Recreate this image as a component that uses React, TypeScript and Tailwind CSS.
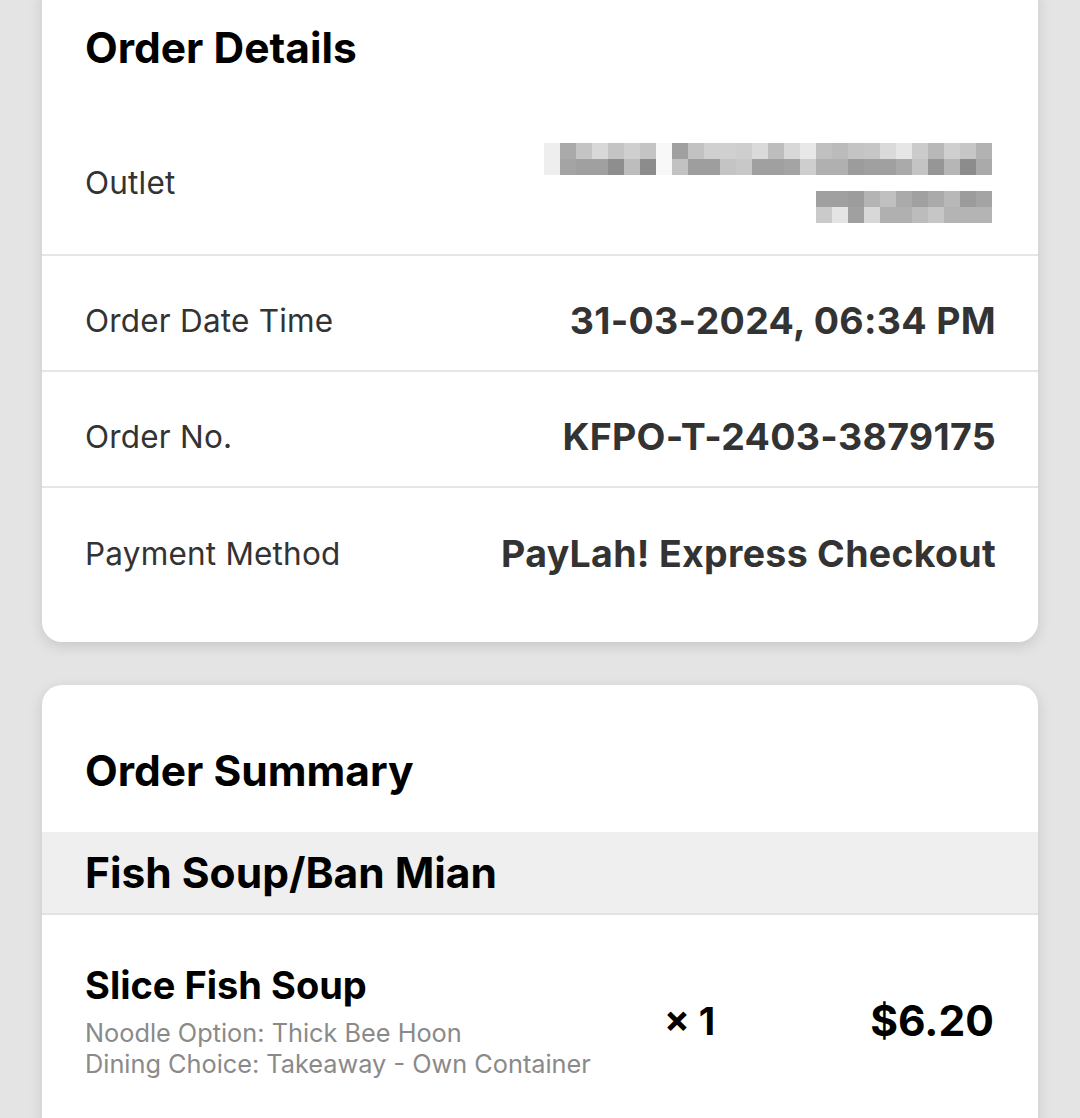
import React from "react";

const row1Top = ["#eee","#aaa","#c4c4c4","#d8d8d8","#c4c4c4","#cfcfcf","#c4c4c4","#f8f8f8","#a0a0a0","#c2c2c2","#d0d0d0","#d0d0d0","#cecece","#dadada","#bdbdbd","#d8d8d8","#e8e8e8","#c0c0c0","#bbbbbb","#c4c4c4","#c6c6c6","#dadada","#e6e6e6","#cbcbcb","#b8b8b8","#cfcfcf","#c6c6c6","#b2b2b2"];
const row1Bot = ["#eee","#a4a4a4","#a0a0a0","#a0a0a0","#8e8e8e","#bdbdbd","#8c8c8c","#f8f8f8","#c2c2c2","#9e9e9e","#9e9e9e","#c4c4c4","#c8c8c8","#a0a0a0","#a0a0a0","#a4a4a4","#cecece","#b0b0b0","#b0b0b0","#9c9c9c","#a0a0a0","#a0a0a0","#aaaaaa","#c4c4c4","#969696","#b6b6b6","#8c8c8c","#aaaaaa"];
const row2Top = ["#a0a0a0","#a0a0a0","#9c9c9c","#b4b4b4","#c0c0c0","#aaaaaa","#a0a0a0","#aaaaaa","#b8b8b8","#9c9c9c","#a4a4a4"];
const row2Bot = ["#cacaca","#e4e4e4","#a0a0a0","#d8d8d8","#b0b0b0","#b0b0b0","#bcbcbc","#c6c6c6","#b4b4b4","#b4b4b4","#b4b4b4"];

function Pixels({ colors }: { colors: string[] }) {
  return (
    <div className="flex">
      {colors.map((c, i) => (
        <div key={i} className="w-[16px] h-[16px]" style={{ backgroundColor: c }} />
      ))}
    </div>
  );
}

function Row({ label, value, last }: { label: string; value: string; last?: boolean }) {
  return (
    <div
      className={
        last
          ? "h-[132px] flex items-center justify-between pl-[43px] pr-[42px]"
          : "h-[116px] pt-[16px] flex items-center justify-between pl-[43px] pr-[42px] border-b-2 border-[#e6e6e6]"
      }
    >
      <span className="text-[31.5px] text-[#333333] tracking-[0.2px]">{label}</span>
      <span className="text-[37.5px] font-bold text-[#333333] tracking-[0.3px]">{value}</span>
    </div>
  );
}

export default function App() {
  return (
    <div
      className="min-h-[1118px] bg-[#e4e4e4] px-[42px] overflow-hidden"
      style={{ fontFamily: "Inter, 'Noto Sans', sans-serif" }}
    >
      <div className="-mt-[20px] bg-white rounded-[20px] shadow-[0_4px_14px_rgba(0,0,0,0.13)] pb-[22px]">
        <div className="h-[132px] pt-[46px] pl-[43px]">
          <h1 className="text-[42.5px] leading-[44px] font-bold text-black">Order Details</h1>
        </div>
        <div className="h-[144px] flex items-center justify-between pl-[43px] pr-[46px] border-b-2 border-[#e6e6e6]">
          <span className="text-[31.5px] text-[#333333] tracking-[0.2px]">Outlet</span>
          <div className="flex flex-col items-end">
            <Pixels colors={row1Top} />
            <Pixels colors={row1Bot} />
            <div className="h-[16px]" />
            <Pixels colors={row2Top} />
            <Pixels colors={row2Bot} />
          </div>
        </div>
        <Row label="Order Date Time" value="31-03-2024, 06:34 PM" />
        <Row label="Order No." value="KFPO-T-2403-3879175" />
        <Row label="Payment Method" value="PayLah! Express Checkout" last />
      </div>

      <div className="mt-[43px] bg-white rounded-t-[20px] shadow-[0_4px_14px_rgba(0,0,0,0.13)] pb-[60px]">
        <div className="h-[147px] pt-[64px] pl-[43px]">
          <h2 className="text-[42.5px] leading-[44px] font-bold text-black">Order Summary</h2>
        </div>
        <div className="h-[83px] bg-[#efefef] border-b-2 border-[#e2e2e2] flex items-center pl-[43px]">
          <h3 className="text-[42.5px] leading-[44px] font-bold text-black">Fish Soup/Ban Mian</h3>
        </div>
        <div className="flex items-center pl-[43px] pr-[44px] pt-[48px]">
          <div className="w-[579px] flex flex-col">
            <span className="text-[38px] leading-[44px] font-bold text-black">Slice Fish Soup</span>
            <div className="mt-[10px] text-[25.3px] leading-[31px] text-[#8a8a8a]">
              <div>Noodle Option: Thick Bee Hoon</div>
              <div>Dining Choice: Takeaway - Own Container</div>
            </div>
          </div>
          <span className="text-[38px] font-bold text-black">× 1</span>
          <span className="flex-1 text-right text-[42.5px] font-bold text-black">$6.20</span>
        </div>
      </div>
    </div>
  );
}
